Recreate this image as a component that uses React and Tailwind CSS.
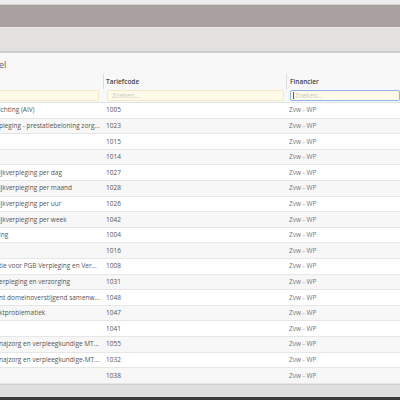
import React from "react";

const rows = [
  ["ichting (AIV)", "1005"],
  ["pleging - prestatiebeloning zorg...", "1023"],
  ["", "1015"],
  ["", "1014"],
  ["ijkverpleging per dag", "1027"],
  ["ijkverpleging per maand", "1028"],
  ["ijkverpleging per uur", "1026"],
  ["ijkverpleging per week", "1042"],
  ["ing", "1004"],
  ["", "1016"],
  ["tie voor PGB Verpleging en Ver...", "1008"],
  ["erpleging en verzorging", "1031"],
  ["nt domeinoverstijgend samenw...", "1048"],
  ["ktproblematiek", "1047"],
  ["", "1041"],
  ["najzorg en verpleegkundige MT...", "1055"],
  ["najzorg en verpleegkundige-MT...", "1032"],
  ["", "1038"],
];

export default function App() {
  return (
    <div className="w-[400px] h-[400px] overflow-hidden bg-[#f8f8f8] flex flex-col font-['Open_Sans',sans-serif]">
      <div className="h-[5px] bg-[#ededed] border-b border-[#d2d2d2] shrink-0" />
      <div className="h-[22px] bg-[#a9a09f] shrink-0" />
      <div className="h-[26px] bg-[#e2e1e0] border-t border-[#ebebeb] border-b-2 border-b-[#cdcdcd] shrink-0" />
      <div className="h-[21px] flex items-center shrink-0 pt-[1px]">
        <span className="text-[9px] text-[#666] ml-[-1px] leading-none">el</span>
      </div>
      <div className="grid grid-cols-[104px_183px_1fr] h-[15px] items-center shrink-0 text-[6.5px] font-semibold text-[#444]">
        <div className="h-full border-r border-[#dcdcdc]" />
        <div className="h-full border-r border-[#dcdcdc] flex items-center pl-[2px]">Tariefcode</div>
        <div className="h-full flex items-center pl-[3px]">Financier</div>
      </div>
      <div className="grid grid-cols-[104px_183px_1fr] h-[14px] items-center shrink-0 border-b border-[#e2e2e2] text-[6.5px]">
        <div className="pr-[5px]">
          <div className="h-[11px] bg-[#fffbe8] border border-[#f0e8c8] rounded-[2px] ml-[-4px]" />
        </div>
        <div className="px-[3px]">
          <div className="h-[11px] bg-[#fffbe8] border border-[#f0e8c8] rounded-[2px] flex items-center pl-[4px] text-[#c8c8c8]">Zoeken...</div>
        </div>
        <div className="pl-[3px]">
          <div className="h-[11px] bg-[#fffbe8] border border-[#8fb4ea] rounded-[2px] flex items-center pl-[2px] text-[#c8c8c8]">
            <span className="w-px h-[7px] bg-[#555] mr-[1px]" />Zoeken...
          </div>
        </div>
      </div>
      <div className="flex flex-col shrink-0">
        {rows.map(([a, b], i) => (
          <div
            key={b}
            className={
              "grid grid-cols-[104px_183px_1fr] h-[15.6px] items-center border-b border-[#e6e6e6] text-[6.5px] text-[#555] " +
              (i % 2 === 0 ? "bg-white" : "bg-[#f7f7f7]")
            }
          >
            <div className="overflow-hidden whitespace-nowrap ml-[-1px]">{a}</div>
            <div className="pl-[2px]">{b}</div>
            <div className="pl-[2px] text-[#777]">Zvw - WP</div>
          </div>
        ))}
      </div>
      <div className="flex-1 bg-[#dfdfdf] border-t border-[#cfcfcf]" />
      <div className="h-[3px] bg-[#3a3a3a] shrink-0" />
    </div>
  );
}
